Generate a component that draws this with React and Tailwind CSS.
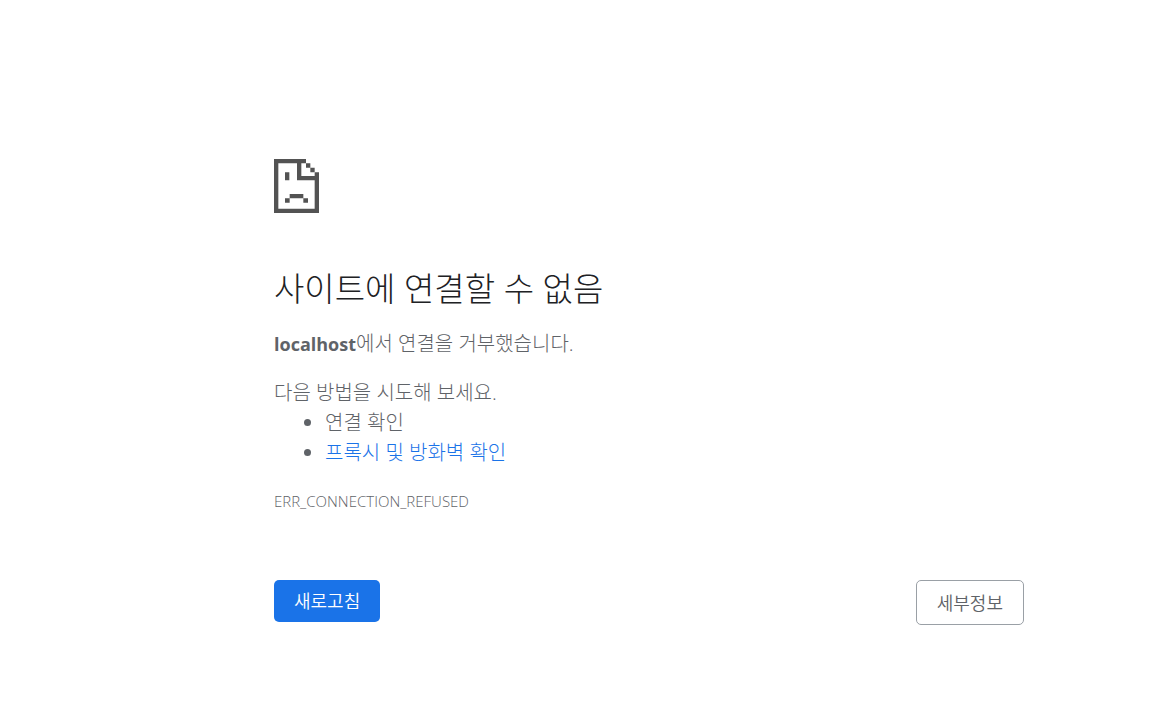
import { useState } from "react";

const SUGGESTIONS = [
  { label: "연결 확인" },
  { label: "프록시 및 방화벽 확인", href: "#buttons" },
];

function SadPageIcon() {
  return (
    <svg
      className="w-[45px] h-[54px] fill-[#535353]"
      viewBox="0 0 135 162"
      aria-hidden="true"
    >
      {/* Sheet outline with the folded corner */}
      <path d="M0 0H96V13H82V51H122V40H135V162H0ZM13 13V149H122V64H69V13Z" fillRule="evenodd" />
      <path d="M96 13H109V26H96ZM109 26H122V40H109Z" />
      {/* Eye and mouth */}
      <path d="M33 40H46V64H33ZM47 105H88V118H47ZM33 118H47V131H33ZM88 118H102V131H88Z" />
    </svg>
  );
}

export default function App() {
  const [showDetails, setShowDetails] = useState(false);

  return (
    <div className="min-h-screen bg-white pt-[159px] pl-[274px] pr-32 font-['Open_Sans','Noto_Sans_CJK_KR',sans-serif] text-[20px] leading-[30px] font-light text-[#5f6368]">
      <main className="max-w-[750px]">
        <SadPageIcon />

        <h1 className="mt-[52px] text-[33px] leading-[48px] text-[#202124]">
          사이트에 연결할 수 없음
        </h1>
        <p className="mt-4">
          <strong className="text-[18px] font-bold">localhost</strong>
          에서 연결을 거부했습니다.
        </p>

        <div className="mt-[19px]">
          <p>다음 방법을 시도해 보세요.</p>
          <ul className="list-disc pl-[51px]">
            {SUGGESTIONS.map((item) => (
              <li key={item.label}>
                {item.href ? (
                  <a href={item.href} className="text-[#1a73e8]">
                    {item.label}
                  </a>
                ) : (
                  item.label
                )}
              </li>
            ))}
          </ul>
        </div>

        <p className="mt-[19px] text-[15px] leading-7 font-[350]">ERR_CONNECTION_REFUSED</p>

        <div id="buttons" className="mt-[65px] flex items-start justify-between text-[18px] font-[350]">
          <button
            type="button"
            onClick={() => window.location.reload()}
            className="h-[42px] rounded-[5px] bg-[#1a73e8] px-5 text-white"
          >
            새로고침
          </button>
          <button
            type="button"
            aria-expanded={showDetails}
            onClick={() => setShowDetails(!showDetails)}
            className="h-[45px] rounded-[5px] border border-[#9aa0a6] px-5"
          >
            세부정보
          </button>
        </div>
      </main>
    </div>
  );
}
